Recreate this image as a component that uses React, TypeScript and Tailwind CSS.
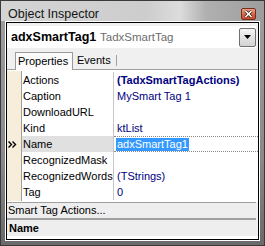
import React from "react";

type Row = { name: string; value: string; bold?: boolean; selected?: boolean };

const rows: Row[] = [
  { name: "Actions", value: "(TadxSmartTagActions)", bold: true },
  { name: "Caption", value: "MySmart Tag 1" },
  { name: "DownloadURL", value: "" },
  { name: "Kind", value: "ktList" },
  { name: "Name", value: "adxSmartTag1", selected: true },
  { name: "RecognizedMask", value: "" },
  { name: "RecognizedWords", value: "(TStrings)" },
  { name: "Tag", value: "0" },
];

const CloseButton = () => (
  <div className="mt-[7px] mr-[8px] ml-auto w-[15px] h-[12px] rounded-[2px] border border-[#7a2c1c] bg-[linear-gradient(to_bottom,#e9a38c,#d46a4c_50%,#c24a2c)] flex items-center justify-center">
    <svg width="9" height="8" viewBox="0 0 9 8">
      <path d="M1.5 1 L7.5 7 M7.5 1 L1.5 7" stroke="#3a1a10" strokeWidth="3" />
      <path d="M1.5 1 L7.5 7 M7.5 1 L1.5 7" stroke="#ffffff" strokeWidth="1.6" />
    </svg>
  </div>
);

const Arrow = () => (
  <svg width="9" height="7" viewBox="0 0 9 7" className="ml-[1px]">
    <path d="M0.5 0.5 L3.5 3.5 L0.5 6.5 M4.5 0.5 L7.5 3.5 L4.5 6.5" stroke="#000" strokeWidth="1.4" fill="none" />
  </svg>
);

const App = () => {
  return (
    <div className="w-[265px] h-[246px] border border-[#3a3a3a] flex flex-col bg-[linear-gradient(135deg,#c9c9c9,#a7a7a7_45%,#8a8a8a_75%,#606060)] font-['Liberation_Sans',Arial,sans-serif] text-black">
      {/* title bar */}
      <div className="h-[20px] flex items-start shrink-0 bg-[linear-gradient(to_right,#d4d4d4,#cdcdcd_55%,#dcdcdc_68%,#b0b0b0_78%,#9d9d9d)]">
        <span className="pl-[7px] pt-[6px] text-[12.5px] leading-[14px] text-[#141414]">Object Inspector</span>
        <CloseButton />
      </div>

      {/* client */}
      <div className="flex-1 flex px-[4px] pb-[4px] bg-[linear-gradient(to_bottom,#9d9d9d,#8a8a8a_60%,#6a6a6a)]">
        <div className="flex-1 flex border border-white">
          <div className="flex-1 flex flex-col border border-black bg-[#f0f0f0]">
            {/* component combo */}
            <div className="mt-[3px] h-[22px] mr-[2px] bg-white flex items-center shrink-0">
              <span className="pl-[4px] w-[93px] text-[12.5px] font-bold leading-[14px]">adxSmartTag1</span>
              <span className="text-[11.5px] leading-[14px] text-[#6d6d6d]">TadxSmartTag</span>
              <div className="ml-auto w-[17px] h-[19px] rounded-[2px] border border-[#707070] bg-[linear-gradient(to_bottom,#f6f6f6,#e2e2e2_50%,#d4d4d4)] flex items-center justify-center">
                <svg width="7" height="4" viewBox="0 0 7 4">
                  <path d="M0 0 L7 0 L3.5 4 Z" fill="#000" />
                </svg>
              </div>
            </div>

            {/* tabs */}
            <div className="mt-[2px] h-[20px] flex items-end pl-[8px] border-b border-[#a0a0a0] shrink-0">
              <div className="w-[58px] h-[18px] mb-[-1px] border border-b-0 border-[#9a9a9a] bg-[#fbfbfb] pl-[2px] flex items-center text-[11px] leading-[13px]">
                Properties
              </div>
              <div className="h-[18px] flex items-center pl-[4px] pr-[5px] text-[11px] leading-[13px]">
                <span>Events</span>
              </div>
              <div className="w-[1px] h-[11px] mb-[3px] bg-[#a0a0a0]" />
            </div>

            {/* property grid */}
            <div className="h-[132px] flex bg-white shrink-0 text-[11px] leading-[13px]">
              <div className="w-[15px] border-r border-[#a0a0a0] bg-[#f6eedb] mt-[1px] mb-[1px] flex flex-col pt-[1px]">
                {rows.map((r) => (
                  <div key={r.name} className="h-[16px] flex items-center">
                    {r.selected ? <Arrow /> : null}
                  </div>
                ))}
              </div>
              <div className="flex-1 flex flex-col pt-[2px]">
                {rows.map((r) => (
                  <div key={r.name} className="h-[16px] flex">
                    <div className={`w-[92px] border-r border-[#c8c8c8] pl-[1px] flex items-center ${r.selected ? "bg-[#e0e0e0]" : ""}`}>
                      {r.name}
                    </div>
                    {r.selected ? (
                      <div className="flex-1 flex items-center border-y border-dotted border-[#8a8a8a] pl-[2px]">
                        <span className="bg-[#3399ff] text-white px-[1px] leading-[13px]">{r.value}</span>
                      </div>
                    ) : (
                      <div className={`flex-1 flex items-center pl-[3px] text-[#000080] ${r.bold ? "font-bold" : ""}`}>
                        {r.value}
                      </div>
                    )}
                  </div>
                ))}
              </div>
            </div>

            {/* bottom panels */}
            <div className="border-t border-[#a0a0a0] h-[16px] mr-[2px] bg-[#eeeeee] flex items-center pl-[1px] text-[11px] leading-[13px] shrink-0">
              Smart Tag Actions...
            </div>
            <div className="border-t-2 border-[#a0a0a0] h-[18px] mr-[2px] bg-[#eeeeee] flex items-center pl-[2px] text-[11px] leading-[13px] font-bold shrink-0">
              Name
            </div>
            <div className="flex-1 bg-white" />
          </div>
        </div>
      </div>
    </div>
  );
};

export default App;
